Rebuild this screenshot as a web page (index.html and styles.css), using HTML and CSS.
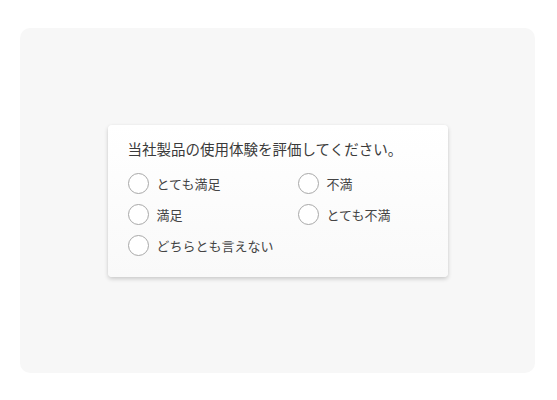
FILE: index.html
```html
<!DOCTYPE html>
<html lang="ja">
<head>
<meta charset="utf-8">
<link rel="stylesheet" href="styles.css">
</head>
<body>
<div class="panel">
  <div class="card">
    <div class="title">当社製品の使用体験を評価してください。</div>
    <div class="options">
      <label class="opt"><span class="radio"></span><span class="lbl">とても満足</span></label>
      <label class="opt"><span class="radio"></span><span class="lbl">不満</span></label>
      <label class="opt"><span class="radio"></span><span class="lbl">満足</span></label>
      <label class="opt"><span class="radio"></span><span class="lbl">とても不満</span></label>
      <label class="opt"><span class="radio"></span><span class="lbl">どちらとも言えない</span></label>
    </div>
  </div>
</div>
</body>
</html>
```
FILE: styles.css
```css
html, body {
  margin: 0;
  padding: 0;
  background: #ffffff;
}
body {
  font-family: "Noto Sans CJK JP", "Noto Sans", sans-serif;
  color: #333;
}
.panel {
  margin: 28px 0 0 20px;
  width: 515px;
  height: 345px;
  background: #f7f7f7;
  border-radius: 10px;
  display: flex;
  align-items: center;
  justify-content: center;
}
.card {
  width: 300px;
  padding: 14px 20px 20px 20px;
  background: linear-gradient(#ffffff, #f9f9f9);
  border-radius: 4px;
  box-shadow: 0 2px 4px rgba(0,0,0,0.18), 0 0 1px rgba(0,0,0,0.08);
}
.title {
  font-size: 14.5px;
  line-height: 20px;
  color: #3a3a3a;
  margin-bottom: 14px;
}
.options {
  display: grid;
  grid-template-columns: 170px 1fr;
  row-gap: 9px;
}
.opt {
  display: flex;
  align-items: center;
  height: 22px;
  gap: 8px;
}
.radio {
  box-sizing: border-box;
  width: 21px;
  height: 21px;
  border: 1px solid #a8a8a8;
  border-radius: 50%;
  background: #fff;
  flex: none;
}
.lbl {
  font-size: 13px;
  line-height: 20px;
  color: #444;
}
```
